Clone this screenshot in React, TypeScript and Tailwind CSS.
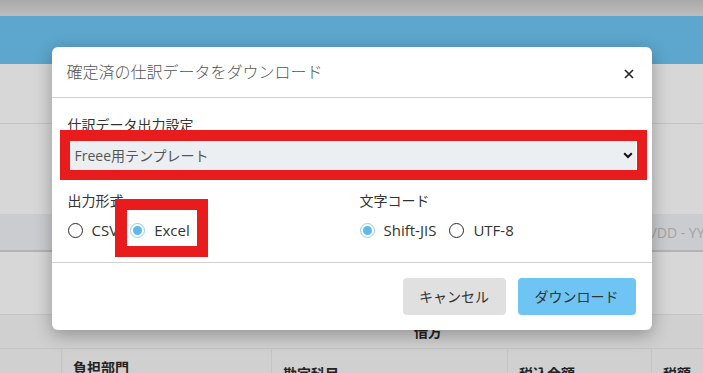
import React from "react";

const font = "font-['Open_Sans','Noto_Sans_CJK_JP',sans-serif]";

function Radio({ checked, label }: { checked?: boolean; label: string }) {
  return (
    <label className="flex items-center gap-[9px]">
      <span
        className={
          checked
            ? "w-[15px] h-[15px] rounded-full border-[1.5px] border-[#8fd0f3] flex items-center justify-center"
            : "w-[15px] h-[15px] rounded-full border-[1.5px] border-[#2a2a2a] flex items-center justify-center"
        }
      >
        {checked && <span className="w-[9px] h-[9px] rounded-full bg-[#5db9ec]" />}
      </span>
      <span className="text-[15px] text-[#333]">{label}</span>
    </label>
  );
}

export default function App() {
  return (
    <div className={`relative w-full h-[373px] overflow-hidden bg-[#d7d7d7] ${font}`}>
      {/* page behind the dialog (already dimmed) */}
      <div className="h-[16px] bg-gradient-to-b from-[#a9a9a9] to-[#bebebe]" />
      <div className="h-[48px] bg-[#5da6cd]" />
      <div className="h-[60px] border-b border-[#c4c4c4]" />
      <div className="h-[90px]" />
      <div className="h-[38px] bg-[#cbcccf] border-b-2 border-[#b3b3b3] flex items-center pl-[590px] overflow-hidden whitespace-nowrap">
        <span className="text-[14px] text-[#a3a3a3]">YYYY/MM/DD - YYYY/MM/DD</span>
      </div>
      <div className="h-[63px] border-b border-[#c4c4c4]" />
      <div className="h-[34px] bg-[#d0d0d0] border-b border-[#c4c4c4] flex items-center pl-[414px]">
        <span className="text-[14px] font-bold text-[#222]">借方</span>
      </div>
      <div className="grid grid-cols-[62px_210px_236px_144px_1fr] bg-[#d0d0d0] h-[30px]">
        <div className="border-r border-[#c4c4c4]" />
        <div className="border-r border-[#c4c4c4] pl-[11px] pt-[9px] text-[14px] font-bold text-[#222] leading-[20px]">負担部門</div>
        <div className="border-r border-[#c4c4c4] pl-[11px] pt-[15px] text-[14px] font-bold text-[#222] leading-[20px]">勘定科目</div>
        <div className="border-r border-[#c4c4c4] pl-[11px] pt-[15px] text-[14px] font-bold text-[#222] leading-[20px]">税込金額</div>
        <div className="pl-[11px] pt-[15px] text-[14px] font-bold text-[#222] leading-[20px]">税額</div>
      </div>

      {/* dialog layer */}
      <div className="absolute inset-0 pt-[47px]">
        <div className="relative w-[600px] mx-auto bg-white rounded-[6px] shadow-[0_5px_18px_rgba(0,0,0,0.3)]">
          <div className="h-[51px] border-b border-[#d2d2d2] flex items-center justify-between pl-[15px] pr-[18px]">
            <h2 className="text-[16px] font-light text-[#555]">確定済の仕訳データをダウンロード</h2>
            <svg width="10" height="10" viewBox="0 0 10 10" className="mt-[4px]">
              <path d="M1 1L9 9M9 1L1 9" stroke="#222" strokeWidth="1.6" />
            </svg>
          </div>

          <div className="px-4 pt-4 pb-[22px]">
            <div className="text-[14px] leading-[21px] text-[#333] mb-[6px]">仕訳データ出力設定</div>
            <div className="relative h-[29px] bg-[#eceff1] flex items-center pl-[7px]">
              <span className="text-[14px] text-[#555]">Freee用テンプレート</span>
              <svg width="10" height="7" viewBox="0 0 10 7" className="absolute right-[3px] top-[11px]">
                <path d="M1.2 1.2L5 5L8.8 1.2" stroke="#111" strokeWidth="2" fill="none" />
              </svg>
            </div>

            <div className="grid grid-cols-[292px_1fr] mt-[20px]">
              <div>
                <div className="text-[14px] leading-[21px] text-[#333]">出力形式</div>
                <div className="flex items-center gap-[12px] mt-[9px] h-[20px]">
                  <Radio label="CSV" />
                  <Radio label="Excel" checked />
                </div>
              </div>
              <div>
                <div className="text-[14px] leading-[21px] text-[#333]">文字コード</div>
                <div className="flex items-center gap-[13px] mt-[9px] h-[20px]">
                  <Radio label="Shift-JIS" checked />
                  <Radio label="UTF-8" />
                </div>
              </div>
            </div>
          </div>

          <div className="border-t border-[#d2d2d2] px-4 pt-[15px] pb-[15px] flex justify-end gap-3">
            <button className="h-[37px] w-[103px] rounded-[4px] bg-[#e0e0e0] text-[14px] text-[#333]">キャンセル</button>
            <button className="h-[37px] w-[118px] rounded-[4px] bg-[#6ec4f2] text-[14px] text-[#333]">ダウンロード</button>
          </div>

          {/* red annotation boxes */}
          <div className="absolute left-[8px] top-[83px] w-[587px] h-[50px] border-[10px] border-t-[11px] border-[#e81c1c]" />
          <div className="absolute left-[63px] top-[152px] w-[93px] h-[58px] border-[11px] border-l-[12px] border-[#e81c1c]" />
        </div>
      </div>
    </div>
  );
}
